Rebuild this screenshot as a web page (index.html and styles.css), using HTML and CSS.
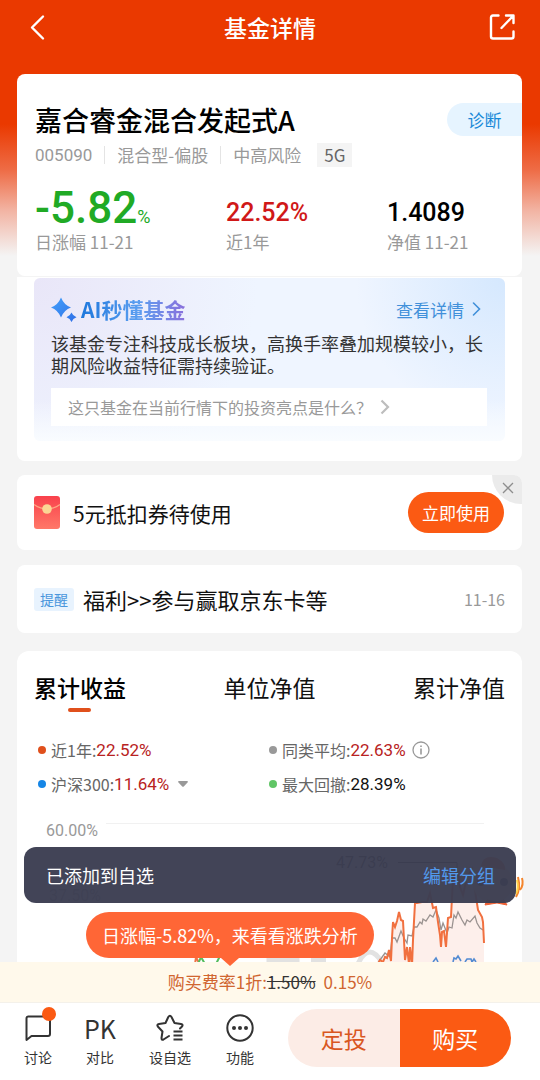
FILE: index.html
```html
<!DOCTYPE html>
<html lang="zh-CN">
<head>
<meta charset="utf-8">
<meta name="viewport" content="width=device-width, initial-scale=1">
<title>基金详情</title>
<link rel="stylesheet" href="styles.css">
</head>
<body>
<div class="app">
  <main class="page">
    <header class="topbar">
      <button class="icon-btn" aria-label="返回">
        <svg width="30" height="30" viewBox="0 0 30 30" fill="none" stroke="#fff" stroke-width="2.4" stroke-linecap="round" stroke-linejoin="round"><path d="M20 4.500L9 15.500L20 26.500"/></svg>
      </button>
      <h1 class="topbar-title">基金详情</h1>
      <button class="icon-btn" aria-label="分享">
        <svg width="30" height="30" viewBox="0 0 30 30" fill="none" stroke="#fff" stroke-width="2.400" stroke-linecap="round" stroke-linejoin="round"><path d="M11.500 3.500H6Q4 3.500 4 5.500V24.500Q4 26.500 6 26.500H24.500Q26.500 26.500 26.500 24.500V19.500M14.500 16L25.500 4.500M19 3.500H26.500V11"/></svg>
      </button>
    </header>

    <section class="card summary">
      <div class="summary-head">
        <h2 class="fund-name">嘉合睿金混合发起式A</h2>
        <button class="diagnose">诊断</button>
      </div>
      <div class="meta">
        <span class="meta-item code">005090</span>
        <span class="meta-item">混合型-偏股</span>
        <span class="meta-item">中高风险</span>
        <span class="meta-tag">5G</span>
      </div>
      <div class="stats">
        <div class="stat"><div class="value value-main">-5.82<small>%</small></div><div class="label">日涨幅 11-21</div></div>
        <div class="stat"><div class="value up">22.52%</div><div class="label">近1年</div></div>
        <div class="stat"><div class="value">1.4089</div><div class="label">净值 11-21</div></div>
      </div>
    </section>

    <section class="card ai-card">
      <div class="ai-panel">
        <div class="ai-head">
          <svg width="26" height="26" viewBox="0 0 26 26"><defs><linearGradient id="spark" x1="0" y1="0" x2="1" y2="1"><stop offset="0" stop-color="#43a0fb"/><stop offset="1" stop-color="#2f6fe6"/></linearGradient></defs><path fill="url(#spark)" d="M10 1.500Q13 9 20 11.500Q13 14 10 21.500Q7 14 0 11.500Q7 9 10 1.500ZM20.500 16.500Q21.900 20 25.500 21.200Q21.900 22.500 20.500 26Q19.100 22.500 15.500 21.200Q19.100 20 20.500 16.500Z"/></svg>
          <h3 class="ai-title">AI秒懂基金</h3>
          <a class="ai-more" href="#">查看详情
            <svg width="9" height="14" viewBox="0 0 9 14" fill="none" stroke="currentColor" stroke-width="1.600" stroke-linecap="round"><path d="M1.500 1L7.500 7L1.500 13"/></svg>
          </a>
        </div>
        <p class="ai-text">该基金专注科技成长板块，高换手率叠加规模较小，长期风险收益特征需持续验证。</p>
        <a class="ai-question" href="#">这只基金在当前行情下的投资亮点是什么？
          <svg width="10" height="16" viewBox="0 0 10 16" fill="none" stroke="#bdbdbd" stroke-width="2.200"><path d="M1.500 1.500L8 8L1.500 14.500"/></svg>
        </a>
      </div>
    </section>

    <section class="card coupon">
      <svg width="26" height="33" viewBox="0 0 26 33"><defs><linearGradient id="packet" x1="0" y1="0" x2="0" y2="1"><stop offset="0" stop-color="#f9414c"/><stop offset="1" stop-color="#ff7868"/></linearGradient></defs><rect width="26" height="33" rx="3" fill="url(#packet)"/><path d="M0 8.500Q13 17.500 26 8.500" fill="none" stroke="#ffa884" stroke-width="1.400"/><circle cx="13" cy="13" r="4.800" fill="#fbd694"/></svg>
      <span class="row-text">5元抵扣券待使用</span>
      <button class="use-btn">立即使用</button>
      <button class="close-btn" aria-label="关闭"><svg width="12" height="12" viewBox="0 0 12 12" stroke="#8d8d8d" stroke-width="1.300"><path d="M1 1L11 11M11 1L1 11"/></svg></button>
    </section>

    <section class="card notice">
      <span class="notice-tag">提醒</span>
      <a class="row-text" href="#">福利&gt;&gt;参与赢取京东卡等</a>
      <time class="notice-date">11-16</time>
    </section>

    <section class="card chart-card">
      <div class="tabs" role="tablist">
        <button class="tab tab-on" role="tab" aria-selected="true">累计收益</button>
        <button class="tab" role="tab" aria-selected="false">单位净值</button>
        <button class="tab" role="tab" aria-selected="false">累计净值</button>
      </div>
      <div class="legend">
        <div class="legend-item"><i class="dot dot-fund"></i>近1年:<b class="num-up">22.52%</b></div>
        <div class="legend-item"><i class="dot dot-peer"></i>同类平均:<b class="num-up">22.63%</b>
          <svg class="info" width="18" height="18" viewBox="0 0 18 18" fill="none" stroke="#999" stroke-width="1.300"><circle cx="9" cy="9" r="8"/><path d="M9 7.500V13.500M9 4.500V6" stroke-width="1.600"/></svg></div>
        <div class="legend-item"><i class="dot dot-index"></i>沪深300:<b class="num-up">11.64%</b>
          <svg class="caret" width="10" height="6" viewBox="0 0 10 6"><path d="M1 0H9Q10.500 0 9.500 1.500L6 5.300Q5 6.300 4 5.300L.500 1.500Q-.500 0 1 0Z" fill="#999"/></svg></div>
        <div class="legend-item"><i class="dot dot-draw"></i>最大回撤:<b class="num">28.39%</b></div>
      </div>
      <svg class="chart" viewBox="0 0 505 180">
        <path d="M89 9.500H467" stroke="#f1f1f1"/>
        <text x="29" y="22" class="axis">60.00%</text>
        <text x="32" y="87" class="axis">37.50%</text>
        <text x="319" y="54" class="peak">47.73%</text>
        <path d="M381 48.500H440V55" fill="none" stroke="#333"/>
        <g fill="none" stroke="#e2e2e2" stroke-width="5"><path d="M252 152V146H280V152M294 146H309M340 152Q352 124 367 152"/></g>
        <path d="M363 148L368 143L370 144L372 136L374 147L375 124L376 108L378 113L380 107L382 98L384 106L386 107L387 126L388 146L390 133L392 146L393 133L395 148L396 126L398 89L410 88L413 79L416 94L419 93L421 108L424 133L425 118L427 117L429 133L431 104L434 103L436 63L440 55L443 73L446 81L450 63L455 55L459 83L461 96L465 103L467 129V180H360Z" fill="#fdefeb"/>
        <path d="M358 152L363 146L368 139L373 143L375 124L378 124L380 128L384 117L387 124L390 129L391 121L395 122L397 113L400 113L403 108L405 110L406 105L409 107L413 101L416 103L419 96L422 104L424 116L426 109L430 119L432 113L435 114L437 101L439 104L441 98L445 106L448 111L450 106L453 108L458 102L460 109L463 114L466 116" fill="none" stroke="#9a9290" stroke-width="1.300"/>
        <path d="M360 152L363 146L366 148L368 143L370 144L372 136L374 147L375 124L376 108L378 113L380 107L382 98L384 106L386 107L387 126L388 146L390 133L392 150L393 133L395 152L396 126L398 89L400 89L405 88L410 88L413 79L416 94L419 93L421 108L423 121L424 133L425 118L427 117L429 133L431 104L434 103L436 63L440 55L443 73L446 81L450 63L455 55L459 83L461 96L465 103L466 108L467 129" fill="none" stroke="#f1703f" stroke-width="2"/>
        <path d="M178 150L179 143L182 149" fill="none" stroke="#ee7346" stroke-width="2"/>
        <path d="M181 150L184 143L188 150M199 150L203 142" fill="none" stroke="#54bd5d" stroke-width="2"/>
        <path d="M416 148L419 144L421 148M436 148L437 144L439 145L441 142L444 147M448 148L450 145L454 145L455 148L457 145L459 148" fill="none" stroke="#528bd2" stroke-width="1.600"/>
        <circle cx="476" cy="69" r="20" fill="#ffe3c0"/><path d="M464 52Q466 40 480 44Q489 49 488 56Z" fill="#f45e2c"/><circle cx="464" cy="68" r="4" fill="#29384e"/><circle cx="487" cy="68" r="4" fill="#29384e"/><path d="M470 86L480 88L487 86L490 91L480 89L468 91Z" fill="#ed5f33" stroke="#ed5f33"/><path d="M499 83Q504 75 501 63M503 76Q507 71 505 64" fill="none" stroke="#f4852c" stroke-width="2"/><path d="M499 80Q502 74 500 66" fill="none" stroke="#ffd34c" stroke-width="2"/>
      </svg>
    </section>
  </main>

  <footer class="dock">
    <div class="overlays">
      <div class="toast" role="status"><span>已添加到自选</span><a href="#">编辑分组</a></div>
      <button class="tip">日涨幅-5.82%，来看看涨跌分析</button>
    </div>
    <div class="rate">购买费率1折:<s>1.50%</s><span class="rate-now">0.15%</span></div>
    <nav class="actions">
      <div class="shortcuts">
        <button class="shortcut"><span class="shortcut-icon"><svg width="28" height="28" viewBox="0 0 28 28" fill="none" stroke="#333" stroke-width="2" stroke-linejoin="round"><path d="M4 2.500H24Q26 2.500 26 4.500V20Q26 22 24 22H7.500L2.500 26V4.500Q2.500 2.500 4 2.500Z"/></svg><i class="badge"></i></span>讨论</button>
        <button class="shortcut"><span class="shortcut-icon pk">PK</span>对比</button>
        <button class="shortcut"><span class="shortcut-icon"><svg width="28" height="28" viewBox="0 0 28 28" fill="none" stroke="#333" stroke-width="2" stroke-linecap="round" stroke-linejoin="round"><path d="M13 22L7.500 25.500Q5.500 26.500 5.500 24L6.500 17.500L1.800 12.500Q.500 10.500 3 10L9.500 9L12.300 3Q14 .500 15.500 3L18.500 9L25 10Q27.500 10.500 26 12.500L24 14.500"/><path d="M17.500 17.500H26.500M17.500 21.500H26.500M17.500 25.500H26.500" stroke-linecap="butt"/></svg></span>设自选</button>
        <button class="shortcut"><span class="shortcut-icon"><svg width="28" height="28" viewBox="0 0 28 28"><circle cx="14" cy="14" r="12.700" fill="none" stroke="#333" stroke-width="2"/><circle cx="8" cy="14" r="2" fill="#333"/><circle cx="14" cy="14" r="2" fill="#333"/><circle cx="20" cy="14" r="2" fill="#333"/></svg></span>功能</button>
      </div>
      <div class="trade">
        <button class="trade-plan">定投</button>
        <button class="trade-buy">购买</button>
      </div>
    </nav>
  </footer>
</div>
</body>
</html>
```
FILE: styles.css
```css
* { box-sizing: border-box; }
body {
  margin: 0;
  background: #f4f4f4;
  color: #111;
  font-family: "Noto Sans CJK SC", sans-serif;
  font-size: 17px;
}
h1, h2, h3, p { margin: 0; font-weight: 400; }
button { padding: 0; border: 0; background: none; color: inherit; font: inherit; cursor: pointer; }
a { color: inherit; text-decoration: none; }
svg { display: block; flex: none; }

.app { display: flex; flex-direction: column; height: 100vh; }
.page {
  flex: 1;
  min-height: 0;
  overflow-y: auto;
  scrollbar-width: none;
  background: linear-gradient(#ea3900 0, #ea3900 124px, #ee6c46 170px, #f2b3a2 210px, #f4f4f4 256px);
}

.topbar { display: flex; align-items: center; justify-content: space-between; height: 54px; margin-bottom: 20px; padding: 0 23px; color: #fff; }
.icon-btn { width: 30px; height: 30px; }
.topbar-title { font-size: 23px; line-height: 32px; font-weight: 500; }

.card { margin: 0 18px 15px 17px; background: #fff; border-radius: 8px; }

.summary { margin-bottom: 1px; padding: 29px 0 22px 18px; }
.summary-head { display: flex; align-items: center; justify-content: space-between; height: 33px; }
.fund-name { font-size: 27px; line-height: 32px; font-weight: 500; color: #000; }
.diagnose { width: 75px; height: 33px; border-radius: 17px 0 0 17px; background: #e6f4ff; color: #1989d8; }
.meta { display: flex; align-items: center; height: 24px; margin-top: 7px; line-height: 24px; color: #999; }
.meta-item { line-height: 18px; }
.meta-item + .meta-item { margin-left: 12px; padding-left: 12px; border-left: 1px solid #e4e4e4; }
.code { font-family: Roboto, sans-serif; }
.meta-tag { margin-left: 16px; padding: 0 7px; background: #f4f4f4; color: #666; }
.stats { display: grid; grid-template-columns: 191px 161px 1fr; margin-top: 20px; }
.stat { display: flex; flex-direction: column; justify-content: flex-end; }
.value { font: 500 25px/34px Roboto, sans-serif; color: #000; }
.value-main { font-size: 44px; line-height: 43px; color: #20aa25; }
.value-main small { font-size: 18px; line-height: 20px; font-weight: 400; }
.up { color: #d01818; }
.label { line-height: 24px; color: #999; }

.ai-card { margin-bottom: 14px; padding: 1px 17px 20px; border-radius: 0 0 8px 8px; }
.ai-panel {
  padding: 17px 18px 15px 17px;
  border-radius: 6px;
  background:
    linear-gradient(to bottom, transparent 75%, #f9fcff),
    radial-gradient(circle at 100% 0, #d5e8fe, transparent 30%),
    radial-gradient(circle at 0 0, #e9e6f8, transparent 45%),
    #eff5ff;
}
.ai-head { display: flex; align-items: center; height: 28px; }
.ai-title {
  margin-left: 4px;
  font-size: 21px;
  line-height: 28px;
  font-weight: 700;
  color: transparent;
  background: linear-gradient(90deg, #1e78dc, #5b9ef0 55%, #8a70dc);
  background-clip: text;
}
.ai-more { display: flex; align-items: center; gap: 8px; margin: 0 6px 0 auto; color: #4190da; }
.ai-text { margin-top: 9px; font-size: 18px; line-height: 22px; color: #333; }
.ai-question { display: flex; align-items: center; gap: 8px; height: 38px; margin-top: 12px; padding: 0 17px; background: #fff; font-size: 16px; color: #999; }

.coupon { position: relative; display: flex; align-items: center; height: 75px; padding: 0 18px 0 17px; }
.row-text { margin-left: 13px; font-size: 21px; line-height: 30px; color: #111; }
.use-btn { width: 96px; height: 41px; margin-left: auto; border-radius: 21px; background: #fb5a13; color: #fff; }
.close-btn { position: absolute; top: 0; right: 0; display: grid; place-items: center; width: 30px; height: 29px; padding: 0 0 4px 2px; border-radius: 0 8px 0 29px; background: #ebebeb; }

.notice { display: flex; align-items: center; height: 68px; margin-bottom: 18px; padding: 0 17px; }
.notice-tag { padding: 0 6px; border-radius: 3px; background: #e8f3fe; color: #4a96dc; font-size: 14px; line-height: 23px; }
.notice .row-text { margin-left: 9px; font-size: 22px; }
.notice-date { margin-left: auto; font-size: 16px; color: #999; }

.chart-card { margin-bottom: 0; padding-top: 19px; border-radius: 12px 12px 0 0; }
.tabs { display: flex; justify-content: space-between; padding: 0 17px; }
.tab { position: relative; font-size: 23px; line-height: 34px; color: #111; }
.tab-on { font-weight: 500; color: #000; }
.tab-on::after { content: ""; position: absolute; left: 50%; bottom: -8px; width: 23px; height: 4px; margin-left: -12px; border-radius: 2px; background: #e0501c; }
.legend { display: grid; grid-template-columns: 231px 1fr; gap: 10px 0; margin-top: 34px; padding: 0 21px; font-size: 16px; line-height: 24px; color: #666; }
.legend-item { display: flex; align-items: center; }
.legend-item b { font-family: Roboto, sans-serif; font-size: 17px; font-weight: 400; }
.dot { width: 8px; height: 8px; margin-right: 5px; border-radius: 50%; }
.dot-fund { background: #e0501c; }
.dot-peer { background: #999; }
.dot-index { background: #1686e6; }
.dot-draw { background: #60c566; }
.num-up { color: #b82222; }
.num { color: #111; }
.info { margin-left: 6px; }
.caret { margin-left: 9px; }
.chart { width: 100%; margin-top: 18px; overflow: visible; }
.axis, .peak { font-family: Roboto, sans-serif; font-size: 16px; fill: #999; }
.peak { fill: #222; }

.dock { position: relative; flex: none; background: #fff; }
.overlays { position: absolute; left: 24px; right: 24px; bottom: 100%; }
.toast { display: flex; align-items: center; justify-content: space-between; height: 56px; padding: 0 21px 0 22px; border-radius: 12px; background: rgba(60, 62, 82, 0.97); color: #fff; font-size: 18px; line-height: 24px; }
.toast a { color: #5299ec; }
.tip { position: relative; display: block; height: 46px; margin: 9px 0 4px 62px; padding: 0 16px; border-radius: 23px; background: #ff6636; color: #fff; font-size: 18px; }
.tip::after { content: ""; position: absolute; left: 50%; top: 100%; margin-left: -9px; border: 9px solid transparent; border-top: 8px solid #ff6636; border-bottom: 0; z-index: 1; }
.rate { display: flex; justify-content: center; height: 41px; line-height: 40px; background: #fff9eb; border-bottom: 1px solid #f4f1ea; color: #d06530; }
.rate s { color: #333; }
.rate-now { margin-left: 8px; }
.actions { display: flex; justify-content: space-between; height: 77px; padding: 6px 29px 13px 7px; }
.shortcuts { display: flex; }
.shortcut { display: flex; flex-direction: column; align-items: center; justify-content: space-between; width: 62px; margin-right: 8px; font-size: 14px; line-height: 20px; color: #333; }
.shortcut:first-child { margin-right: 0; }
.shortcut-icon { position: relative; display: grid; place-items: center; height: 38px; }
.pk { font-size: 25px; line-height: 38px; }
.badge { position: absolute; top: -2px; right: -4px; width: 14px; height: 14px; border-radius: 50%; background: #fb5a13; }
.trade { display: flex; width: 223px; overflow: hidden; border-radius: 29px; font-size: 23px; }
.trade button { flex: 1; }
.trade-plan { background: #fcece6; color: #d9571f; }
.trade-buy { background: #fb5a13; color: #fff; }
```
